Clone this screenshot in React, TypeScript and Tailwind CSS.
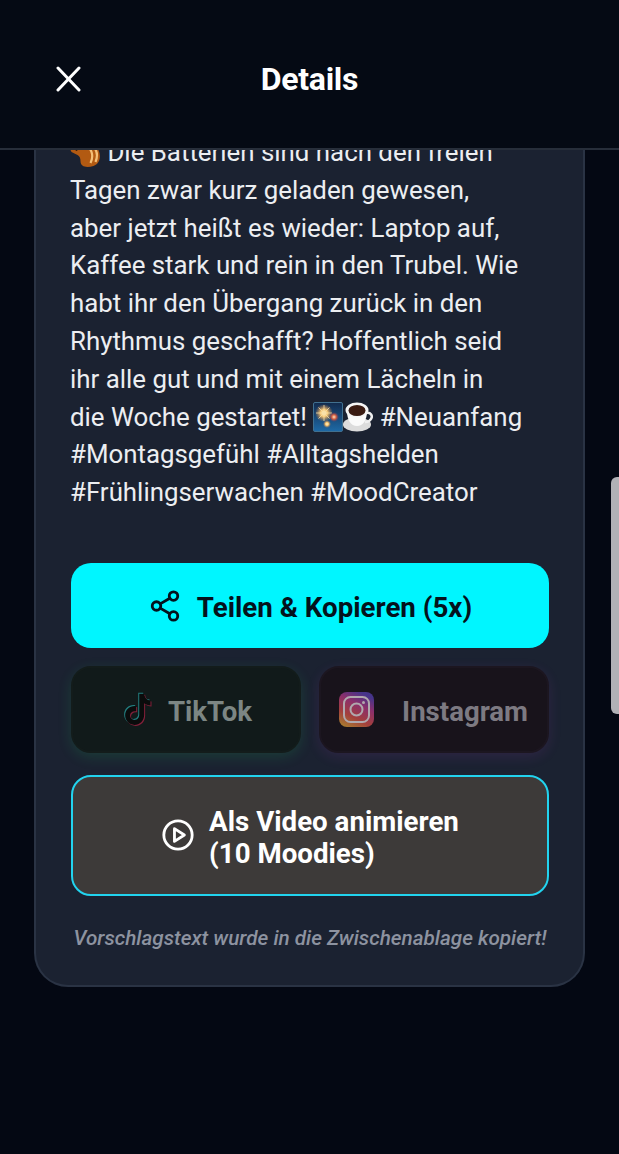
import React from "react";

const bodyText = [
  "Tagen zwar kurz geladen gewesen,",
  "aber jetzt heißt es wieder: Laptop auf,",
  "Kaffee stark und rein in den Trubel. Wie",
  "habt ihr den Übergang zurück in den",
  "Rhythmus geschafft? Hoffentlich seid",
  "ihr alle gut und mit einem Lächeln in",
];

function Squirrel() {
  return (
    <svg width="31" height="26" viewBox="0 0 30 26" className="inline-block align-[-8px]">
      <path d="M10 3c5-3 14-3 18 4 3 7 1 14-5 16-7 2-13 1-13-5 0-3-1-5-3-6L1 9 0 7l5-1 2-3z" fill="#b25a12" />
      <path d="M17 4c5 3 6 10 3 16M23 4c4 4 4 10 2 15" stroke="#f4c078" strokeWidth="2.200" fill="none" />
      <circle cx="6" cy="7" r="1" fill="#3a1a05" />
    </svg>
  );
}

function Fireworks() {
  return (
    <svg width="30" height="30" viewBox="0 0 30 30" className="inline-block shrink-0">
      <defs>
        <linearGradient id="night" x1="0" y1="0" x2="0" y2="1">
          <stop offset="0" stopColor="#122a4d" />
          <stop offset="1" stopColor="#1e6aa6" />
        </linearGradient>
        <radialGradient id="burst">
          <stop offset="0" stopColor="#fff6d5" />
          <stop offset="0.4" stopColor="#f5c774" />
          <stop offset="1" stopColor="#c9773a" stopOpacity="0" />
        </radialGradient>
        <radialGradient id="burstRed">
          <stop offset="0" stopColor="#ffe2c4" />
          <stop offset="0.45" stopColor="#d8603f" />
          <stop offset="1" stopColor="#7c2f5c" stopOpacity="0" />
        </radialGradient>
      </defs>
      <rect x="0.500" y="0.500" width="29" height="29" rx="1.500" fill="url(#night)" stroke="#41708f" />
      <circle cx="11" cy="11" r="9" fill="url(#burst)" />
      <path d="M11 3v16M3 11h16M5.500 5.500l11 11M16.500 5.500l-11 11" stroke="#f7dfa6" strokeWidth="0.800" />
      <circle cx="21" cy="15" r="5" fill="url(#burstRed)" />
      <circle cx="14" cy="22" r="4" fill="url(#burst)" />
    </svg>
  );
}

function Coffee() {
  return (
    <svg width="30" height="30" viewBox="0 0 30 30" className="inline-block shrink-0">
      <ellipse cx="14" cy="22.500" rx="14" ry="7" fill="#dcdcdc" />
      <path d="M4 9c0 9 4 15 10 15s10-6 10-15z" fill="#fafafa" />
      <path d="M23 11c5-1 7 3 5 6-1 2-4 3-6 3" stroke="#efefef" strokeWidth="2.500" fill="none" />
      <ellipse cx="14" cy="8" rx="11.500" ry="7.500" fill="#f5f5f5" />
      <ellipse cx="14" cy="8.500" rx="8.500" ry="5.500" fill="#3a1b12" />
    </svg>
  );
}

function TikTokLogo() {
  const d =
    "M17 3h4c.3 3 2.200 5.300 5.200 5.600v4c-2 0-3.700-.6-5.200-1.700v9.300c0 5-3.700 8.300-7.800 8.300-4.400 0-7.700-3.500-7.700-7.800 0-4.700 4-8.200 9-7.500v4.200c-2.700-.6-5 1-5 3.400 0 2 1.600 3.600 3.600 3.600 2.200 0 3.900-1.500 3.900-4.200z";
  return (
    <svg width="36" height="38" viewBox="3 0 26 31" aria-hidden="true">
      <path d={d} fill="#237f80" transform="translate(-0.8 -0.8)" />
      <path d={d} fill="#84203a" transform="translate(0.8 0.8)" />
      <path d={d} fill="#0a0c0c" />
    </svg>
  );
}

function InstagramLogo() {
  return (
    <svg width="35" height="35" viewBox="0 0 35 35" aria-hidden="true">
      <defs>
        <linearGradient id="ig" x1="0.1" y1="1" x2="0.6" y2="0">
          <stop offset="0" stopColor="#a8802f" />
          <stop offset="0.35" stopColor="#a33f3c" />
          <stop offset="0.7" stopColor="#8c2f6b" />
          <stop offset="1" stopColor="#46348a" />
        </linearGradient>
      </defs>
      <rect width="35" height="35" rx="8" fill="url(#ig)" />
      <rect x="5" y="5" width="25" height="25" rx="6.500" fill="none" stroke="#b0a8ae" strokeWidth="2" />
      <circle cx="17.500" cy="17.500" r="6" fill="none" stroke="#b0a8ae" strokeWidth="2" />
      <circle cx="24.500" cy="10.500" r="1.500" fill="#b0a8ae" />
    </svg>
  );
}

export default function App() {
  return (
    <div className="relative flex h-[1154px] w-[619px] flex-col overflow-hidden bg-[#040813] font-['Roboto',sans-serif] text-white">
      {/* status bar remnant cut off at the top edge */}
      <div className="absolute left-[98px] top-0 h-[2px] w-[10px] bg-[#9a9ca0]" />

      <header className="relative z-10 flex h-[150px] shrink-0 items-start justify-center border-b-2 border-[#272e3a] bg-[#050a14]">
        <button className="absolute left-[48px] top-[59px] flex h-[40px] w-[40px] items-center justify-center">
          <svg width="25" height="26" viewBox="0 0 25 26" fill="none" stroke="white" strokeWidth="3" strokeLinecap="round">
            <path d="M2 2l21 22M23 2 2 24" />
          </svg>
        </button>
        <h1 className="mt-[60px] text-[32px] font-bold leading-[38px] tracking-[-0.3px]">Details</h1>
      </header>

      <main className="min-h-0 flex-1 overflow-hidden">
        <section className="mx-[34px] -mt-[16px] rounded-b-[34px] border-x-2 border-b-2 border-[#2a3344] bg-[#1b2231] pb-[35px] pl-[35px] pr-[34px]">
          <div className="-ml-px text-[25.85px] leading-[37.8px] text-[#eceef1]">
            <p className="whitespace-nowrap"><Squirrel /> Die Batterien sind nach den freien</p>
            {bodyText.map((line) => (
              <p key={line} className="whitespace-nowrap">{line}</p>
            ))}
            <p className="flex items-center whitespace-nowrap">
              die Woche gestartet!&nbsp;<Fireworks /><Coffee />&nbsp;#Neuanfang
            </p>
            <p className="whitespace-nowrap">#Montagsgefühl #Alltagshelden</p>
            <p className="whitespace-nowrap">#Frühlingserwachen #MoodCreator</p>
          </div>

          <div className="mt-[51px] flex flex-col">
            <button className="flex h-[85px] w-full items-center justify-center gap-[15px] rounded-[20px] bg-[#00f6ff] pt-[4px] text-[27.7px] font-bold text-[#04121c]">
              <svg className="-mt-[3px]" width="34" height="34" viewBox="0 0 24 24" fill="none" stroke="currentColor" strokeWidth="2" strokeLinecap="round" strokeLinejoin="round">
                <circle cx="18" cy="5" r="3" />
                <circle cx="6" cy="12" r="3" />
                <circle cx="18" cy="19" r="3" />
                <path d="M8.590 13.510l6.830 3.980M15.410 6.510l-6.820 3.980" />
              </svg>
              Teilen &amp; Kopieren (5x)
            </button>

            <div className="mt-[18px] grid grid-cols-2 gap-[18px]">
              <button className="flex h-[87px] items-center justify-center gap-[12px] rounded-[20px] border-2 border-[#131c1b] bg-[#111a1a] text-[27.6px] font-bold text-[#7c8684] shadow-[0_4px_14px_rgba(34,197,94,0.16)]">
                <TikTokLogo />
                <span className="pt-[4px]">TikTok</span>
              </button>
              <button className="flex h-[87px] items-center justify-between rounded-[20px] border-2 border-[#1c1620] bg-[#18131b] pl-[18px] pr-[19px] text-[27.6px] font-bold text-[#7d7a82] shadow-[0_4px_14px_rgba(217,70,239,0.1)]">
                <InstagramLogo />
                <span className="pt-[4px]">Instagram</span>
              </button>
            </div>

            <button className="mt-[22px] flex h-[121px] w-full items-center justify-center gap-[14px] rounded-[20px] border-2 border-[#22d3ee] bg-[#3d3a39] text-[27.7px] font-bold leading-[32.5px]">
              <svg width="34" height="34" viewBox="0 0 24 24" fill="none" stroke="white" strokeWidth="2" strokeLinecap="round" strokeLinejoin="round">
                <circle cx="12" cy="12" r="10" />
                <path d="M9.500 7.500l7 4.500-7 4.500z" />
              </svg>
              <span className="pt-[6px] text-left">
                Als Video animieren
                <br />
                (10 Moodies)
              </span>
            </button>

            <p className="mt-[30px] whitespace-nowrap text-center text-[20.7px] font-medium italic leading-[24px] text-[#8d93a0]">
              Vorschlagstext wurde in die Zwischenablage kopiert!
            </p>
          </div>
        </section>
      </main>

      {/* overlay scroll handle at the window edge */}
      <div className="absolute right-0 top-[477px] h-[237px] w-[8px] rounded-l-[6px] bg-[#b1b1b6]" />
    </div>
  );
}
